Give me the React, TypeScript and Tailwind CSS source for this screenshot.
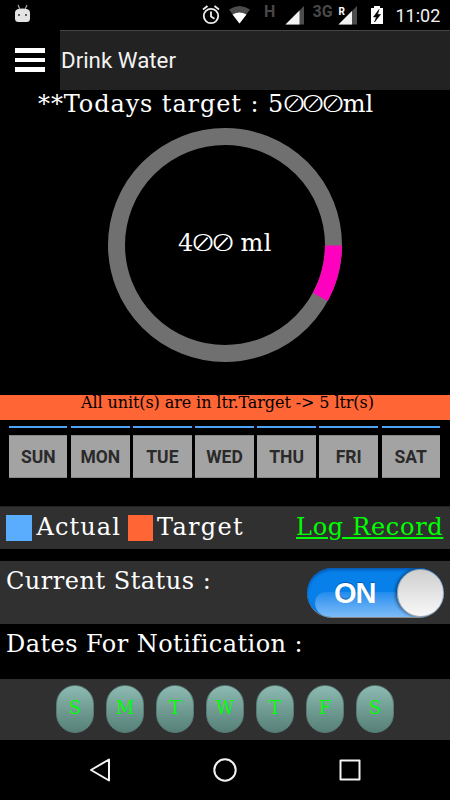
import React from "react";

const slab = "font-['DejaVu_Serif','Liberation_Serif',serif] whitespace-pre";

function Zero({ className = "" }: { className?: string }) {
  return (
    <span className={`relative inline-flex justify-center font-['Lato',sans-serif] font-light tracking-normal ${className}`}>
      <span className="inline-block scale-x-[1.55]">0</span>
      <svg className="absolute inset-0 h-full w-full" viewBox="0 0 20 30">
        <path d="M4.500 21.500L15 10.500" stroke="currentColor" strokeWidth="1.700" />
      </svg>
    </span>
  );
}

function StatusBar() {
  return (
    <div className="h-[30px] bg-black">
      <svg width="450" height="30" viewBox="0 0 450 30" className="block">
        <path d="M15 12.500q0-4 7.500-4t7.500 4v6q0 3.500-3.500 3.500h-8q-3.500 0-3.500-3.500z" fill="#e4e4e4" />
        <path d="M18 5l1.800 4M27 5l-1.800 4" stroke="#aaa" strokeWidth="1.200" />
        <circle cx="19" cy="15" r="1" fill="#333" />
        <circle cx="26" cy="15" r="1" fill="#333" />
        <g fill="none" stroke="#eee" strokeWidth="1.800">
          <circle cx="211" cy="16" r="7.200" />
          <path d="M211 11.500v5l3.500 2.200M203 9.500l4.500-3.500M219 9.500l-4.500-3.500" />
        </g>
        <path d="M239.500 23.500L229 9.500q10.500-7 21 0z" fill="#4c4c4c" />
        <path d="M239.500 23.500L232.500 14.500q7-4 14 0z" fill="#fff" />
        <path d="M304 6v18.500h-18.500z" fill="#4c4c4c" />
        <path d="M299.500 10.500v14h-14z" fill="#f2f2f2" />
        <path d="M357 6v18.500h-18.500z" fill="#4c4c4c" />
        <path d="M352 11v13.500h-13.500z" fill="#f2f2f2" />
        <path d="M371 8h3V6h6v2h3v16h-12z" fill="#fff" />
        <path d="M379 9.500l-5.500 7.500h3l-2 5 6-7.500h-3z" fill="#000" stroke="#000" strokeWidth=".6" />
        <g className="font-['Roboto',sans-serif]">
          <text x="264" y="17" fontSize="16" fontWeight="700" fill="#484848">H</text>
          <text x="312.500" y="17" fontSize="16" fontWeight="700" fill="#484848">3G</text>
          <text x="338.500" y="15" fontSize="10" fontWeight="700" fill="#fff">R</text>
          <text x="395.500" y="22" fontSize="18" fontWeight="400" fill="#f2f2f2">11:02</text>
        </g>
      </svg>
    </div>
  );
}

function Header() {
  return (
    <div className="flex h-[60px]">
      <div className="flex w-[60px] flex-col justify-center gap-[5px] pl-[15px]">
        <div className="h-[4.500px] w-[30px] bg-white" />
        <div className="h-[4.500px] w-[30px] bg-white" />
        <div className="h-[4.500px] w-[30px] bg-white" />
      </div>
      <div className="flex flex-1 items-center border-t border-[#454545] bg-[#222] pl-[1px] font-['Roboto',sans-serif] text-[22.300px] text-[#f3f3f3]">
        Drink Water
      </div>
    </div>
  );
}

function Ring() {
  return (
    <div className="relative ml-[108px] mt-[8px] flex h-[234px] w-[234px] items-center justify-center">
      <svg className="absolute inset-0" width="234" height="234" viewBox="0 0 234 234">
        <circle cx="117" cy="117" r="108.500" fill="none" stroke="#707070" strokeWidth="17" />
        <path d="M225.500 117.500A108.500 108.500 0 0 1 212.300 169" fill="none" stroke="#ff00bf" strokeWidth="17" />
      </svg>
      <div className={`${slab} -mt-[6px] text-[24px] leading-[30px] text-white`}>
        <span>4</span><Zero className="w-[19.500px]" /><Zero className="w-[19.500px]" /><span className="tracking-[0.500px]"> ml</span>
      </div>
    </div>
  );
}

const days = ["SUN", "MON", "TUE", "WED", "THU", "FRI", "SAT"];
const pills = ["S", "M", "T", "W", "T", "F", "S"];

export default function App() {
  return (
    <div className="h-[800px] w-[450px] overflow-hidden bg-black text-white">
      <StatusBar />
      <Header />
      <div className={`${slab} h-[30px] pl-[38px] text-[24px] leading-[25px]`}>
        <span className="tracking-[0.900px]">**Todays target : 5</span><Zero className="w-[19.500px]" /><Zero className="w-[19.500px]" /><Zero className="w-[19.500px]" /><span>ml</span>
      </div>
      <Ring />
      <div className={`${slab} mt-[33px] h-[25px] bg-[#ff6535] pl-[81px] text-[16px] leading-[15px] text-black`}>
        <span className="tracking-[-0.090px]">{"All unit(s) are in ltr.Target -> 5 ltr(s)"}</span>
      </div>
      <div className="grid grid-cols-7 gap-x-[3.600px] pl-[9px] pr-[10px] pt-[6px]">
        {days.map((d) => (
          <div key={d} className="flex flex-col gap-[7px]">
            <div className="h-[2px] bg-[#4da3f5]" />
            <div className="flex h-[43px] items-center justify-center border-y border-[#888] bg-[#a3a3a3] pt-[1px] font-['Roboto',sans-serif] text-[17.500px] font-bold text-[#2a2a2a]">
              {d}
            </div>
          </div>
        ))}
      </div>
      <div className={`${slab} mt-[28px] flex h-[43px] items-start border-t border-[#222] bg-[#303030] pl-[6px] text-[24px] leading-[40px]`}>
        <div className="mt-[8px] h-[26px] w-[25.500px] bg-[#59adfc]" />
        <span className="ml-[5px] w-[91.500px] tracking-[1.100px]">Actual</span>
        <div className="mt-[8px] h-[26px] w-[25px] bg-[#ff6535]" />
        <span className="ml-[4px] w-[139px] tracking-[1.300px]">Target</span>
        <span className="tracking-[0.700px] text-[#00ff00] underline decoration-2 underline-offset-[2px]">Log Record</span>
      </div>
      <div className={`${slab} mt-[12px] flex h-[63px] justify-between bg-[#303030] pl-[6px] pr-[6px] text-[24px] leading-[40px]`}>
        <span className="tracking-[0.500px]">Current Status :</span>
        <div className="relative mt-[7px] flex h-[50px] w-[137px] items-center justify-between overflow-hidden rounded-full border-b border-[#8a8a8a] bg-[#0780ea] shadow-[inset_0_2px_3px_#0558b0]">
          <div className="absolute bottom-0 left-[8px] h-[25px] w-[129px] rounded-tl-[18px] rounded-bl-[25px] bg-linear-to-b from-[#1e8cee] to-[#7cbcf7]" />
          <span className="relative ml-[27px] inline-block font-['Liberation_Sans',sans-serif] text-[29px] font-bold tracking-[-1px] [text-shadow:0_-1px_1px_#0558b0]">ON</span>
          <div className="relative h-[48px] w-[47px] rounded-full border border-[#aaa] bg-linear-to-b from-[#cfcfcf] to-[#f8f8f8] shadow-[-2px_0_3px_#0006]" />
        </div>
      </div>
      <div className={`${slab} h-[55px] pl-[6px] text-[24px] leading-[40px]`}>
        <span className="tracking-[0.450px]">Dates For Notification :</span>
      </div>
      <div className="flex h-[61px] gap-[12px] bg-[#303030] pl-[56px] pt-[6px]">
        {pills.map((p, i) => (
          <div key={i} className={`${slab} flex h-[48px] w-[38px] items-center justify-center rounded-[19px] border border-[#567b74] bg-linear-to-b from-[#8dbab2] to-[#568078] pb-[3px] text-[18px] text-[#00ff00]`}>
            {p}
          </div>
        ))}
      </div>
      <svg className="block" width="450" height="60" viewBox="0 0 450 60" fill="none" stroke="#f2f2f2" strokeWidth="2" strokeLinejoin="round">
        <path d="M109 19.500v21L91 30z" />
        <circle cx="225" cy="30" r="10.700" />
        <rect x="340.500" y="20.500" width="19" height="19" />
      </svg>
    </div>
  );
}
